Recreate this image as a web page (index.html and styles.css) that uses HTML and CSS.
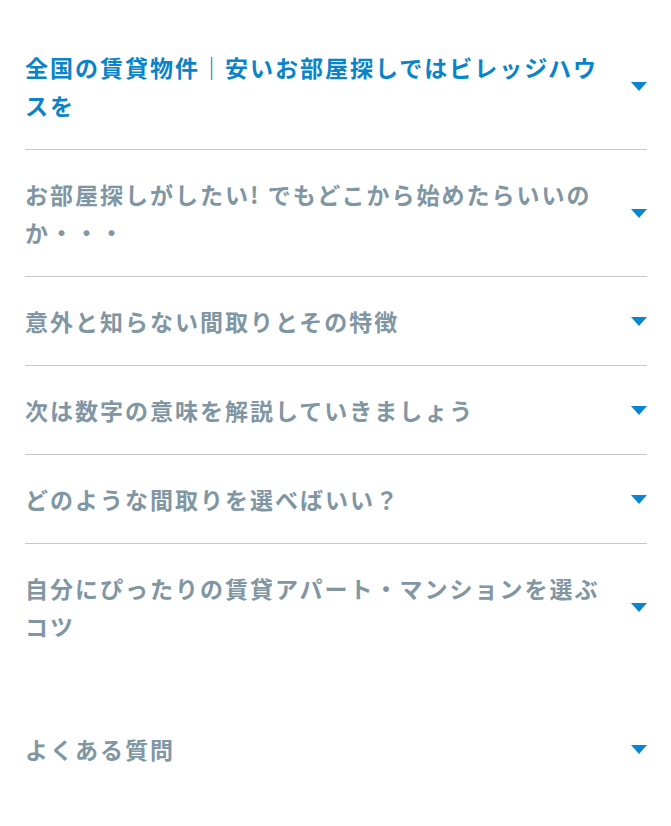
FILE: index.html
```html
<!DOCTYPE html>
<html lang="ja">
<head>
<meta charset="utf-8">
<link rel="stylesheet" href="styles.css">
</head>
<body>
<div class="page">
  <ul class="toc">
    <li class="item active"><span class="label">全国の賃貸物件｜安いお部屋探しではビレッジハウスを</span><span class="arrow"></span></li>
    <li class="item"><span class="label">お部屋探しがしたい! でもどこから始めたらいいのか・・・</span><span class="arrow"></span></li>
    <li class="item"><span class="label">意外と知らない間取りとその特徴</span><span class="arrow"></span></li>
    <li class="item"><span class="label">次は数字の意味を解説していきましょう</span><span class="arrow"></span></li>
    <li class="item"><span class="label">どのような間取りを選べばいい？</span><span class="arrow"></span></li>
    <li class="item last"><span class="label">自分にぴったりの賃貸アパート・マンションを選ぶコツ</span><span class="arrow"></span></li>
  </ul>
  <ul class="toc faq">
    <li class="item last"><span class="label">よくある質問</span><span class="arrow"></span></li>
  </ul>
</div>
</body>
</html>
```
FILE: styles.css
```css
html, body {
  margin: 0;
  padding: 0;
  background: #ffffff;
}
.page {
  padding: 23px 24px 0 25px;
  font-family: "Noto Sans CJK JP", "Noto Sans", sans-serif;
}
.toc {
  list-style: none;
  margin: 0;
  padding: 0;
}
.faq {
  margin-top: 35px;
}
.item {
  display: flex;
  align-items: center;
  justify-content: space-between;
  padding: 25px 0;
  border-bottom: 1px solid #c8c8c8;
}
.item.last {
  border-bottom: none;
}
.label {
  max-width: 585px;
  font-size: 23px;
  font-weight: 700;
  line-height: 38px;
  letter-spacing: 2px;
  color: #8196a3;
}
.active .label {
  color: #0a83c8;
}
.arrow {
  flex: none;
  width: 0;
  height: 0;
  border-left: 8px solid transparent;
  border-right: 8px solid transparent;
  border-top: 9px solid #0a86d0;
}
```
